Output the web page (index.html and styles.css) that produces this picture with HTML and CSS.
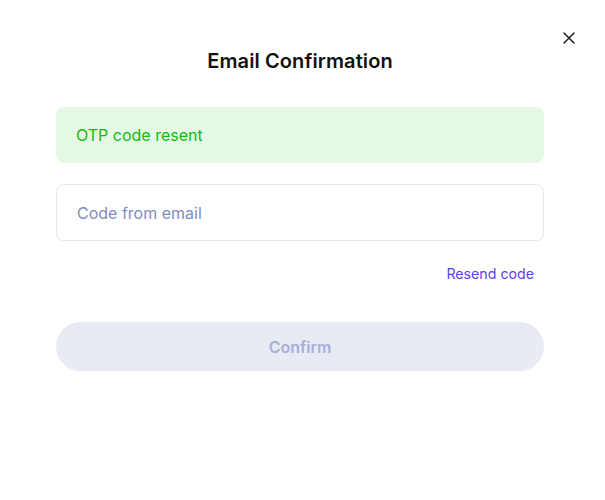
FILE: index.html
```html
<!DOCTYPE html>
<html lang="en">
<head>
    <meta charset="UTF-8">
    <meta name="viewport" content="width=device-width, initial-scale=1.0">
    <title>Email Confirmation</title>
    <link rel="stylesheet" href="styles.css">
</head>
<body>
    <div class="modal">
        <button class="close-btn" aria-label="Close">
            <svg width="14" height="14" viewBox="0 0 14 14">
                <path d="M2 2 L12 12 M12 2 L2 12" stroke="#1f1f24" stroke-width="1.5" stroke-linecap="round"/>
            </svg>
        </button>

        <h1>Email Confirmation</h1>

        <div class="alert-success">OTP code resent</div>

        <input class="code-input" type="text" placeholder="Code from email">

        <div class="resend-row">
            <a href="#" class="resend-link">Resend code</a>
        </div>

        <button class="confirm-btn" disabled>Confirm</button>
    </div>
</body>
</html>
```

FILE: styles.css
```css
body {
    font-family: 'Inter', 'Noto Sans', sans-serif;
    margin: 0;
    padding: 0;
    background-color: #fff;
    color: #111;
}
.modal {
    position: relative;
    width: 488px;
    margin-left: 56px;
    padding-top: 47px;
    display: flex;
    flex-direction: column;
}
.close-btn {
    position: absolute;
    top: 31px;
    right: -32px;
    width: 14px;
    height: 14px;
    padding: 0;
    border: none;
    background: none;
    cursor: pointer;
}
h1 {
    margin: 0;
    text-align: center;
    font-size: 20px;
    font-weight: 600;
    letter-spacing: 0.1px;
    line-height: 28px;
    color: #111;
}
.alert-success {
    margin-top: 32px;
    height: 56px;
    box-sizing: border-box;
    padding: 0 20px;
    display: flex;
    align-items: center;
    background-color: #e5f7e5;
    border-radius: 8px;
    color: #13bb13;
    font-size: 16px;
}
.code-input {
    margin-top: 21px;
    height: 57px;
    box-sizing: border-box;
    padding: 0 20px;
    border: 1px solid #e3e6f1;
    border-radius: 8px;
    font-family: inherit;
    font-size: 16px;
    color: #222;
    outline: none;
}
.code-input::placeholder {
    color: #7f8cc0;
}
.resend-row {
    margin-top: 24px;
    display: flex;
    justify-content: flex-end;
    padding-right: 10px;
}
.resend-link {
    color: #5b43e6;
    font-size: 14.2px;
    line-height: 18px;
    text-decoration: none;
}
.confirm-btn {
    margin-top: 39px;
    height: 49px;
    border: none;
    border-radius: 25px;
    background-color: #e8eaf4;
    color: #a7afd8;
    font-family: inherit;
    font-size: 16px;
    font-weight: 600;
}
```
